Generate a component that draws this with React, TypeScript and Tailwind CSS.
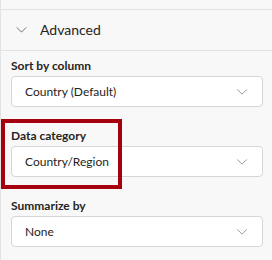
interface Field {
  label: string;
  value: string;
}

const fields: Field[] = [
  { label: 'Sort by column', value: 'Country (Default)' },
  { label: 'Data category', value: 'Country/Region' },
  { label: 'Summarize by', value: 'None' },
];

const Chevron = ({ className }: { className?: string }) => (
  <svg className={className} width="12" height="7" viewBox="0 0 12 7" fill="none">
    <path d="M0.5 0.5 L6 6 L11.5 0.5" stroke="currentColor" strokeWidth="1" />
  </svg>
);

const App = () => {
  return (
    <div
      className="w-[272px] h-[260px] overflow-hidden bg-[#f8f8f8] border-l border-[#e3e3e3] text-[#252423]"
      style={{ fontFamily: '"Segoe UI", Lato, sans-serif' }}
    >
      <div className="h-[9px]" />
      {/* Section header */}
      <div className="h-[42px] border-y border-[#e1e1e1] flex items-center">
        <Chevron className="ml-[15px] w-[11px] h-[6px] text-[#605e5c]" />
        <span className="ml-[13px] text-[14px] leading-none">Advanced</span>
      </div>

      <div className="relative pl-[10px] pr-[9px] pt-[6px]">
        {fields.map((field) => (
          <div key={field.label} className="mb-[20px] flex flex-col">
            <label className="text-[12px] font-bold leading-[18px]">{field.label}</label>
            <button className="mt-[1px] h-[31px] flex items-center justify-between rounded-[4px] border border-[#d6d6d6] bg-white pl-[13px] pr-[14px] text-left">
              <span className="text-[12px]">{field.value}</span>
              <Chevron className="w-[12px] h-[6px] text-[#8a8886]" />
            </button>
          </div>
        ))}

        {/* annotation highlight */}
        <div className="absolute left-0 top-[68px] w-[121px] h-[70px] border-[4px] border-[#a6000e] pointer-events-none" />
      </div>
    </div>
  );
};

export default App;
